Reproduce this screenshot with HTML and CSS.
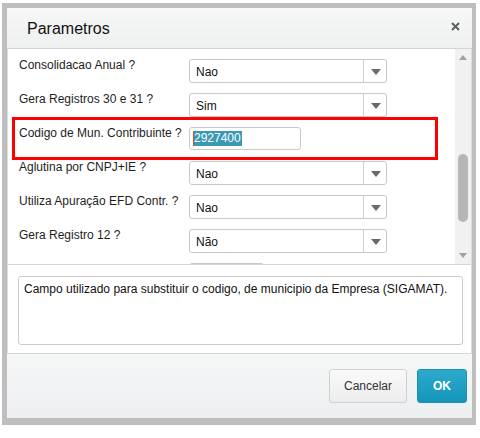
FILE: index.html
```html
<!DOCTYPE html>
<html lang="pt-BR">
<head>
    <meta charset="UTF-8">
    <meta name="viewport" content="width=device-width, initial-scale=1.0">
    <title>Parametros</title>
    <link rel="stylesheet" href="styles.css">
</head>
<body>
    <div class="frame">
        <div class="dialog">
            <div class="header">
                <span class="title">Parametros</span>
                <span class="close">
                    <svg width="9" height="9" viewBox="0 0 9 9"><path d="M1 1L8 8M8 1L1 8" stroke="#5f5f5f" stroke-width="2"/></svg>
                </span>
            </div>

            <div class="body">
                <div class="panel">
                    <div class="rows">
                        <div class="row">
                            <div class="label">Consolidacao Anual ?</div>
                            <div class="select"><span class="value">Nao</span><span class="arrow"></span></div>
                        </div>
                        <div class="row">
                            <div class="label">Gera Registros 30 e 31 ?</div>
                            <div class="select"><span class="value">Sim</span><span class="arrow"></span></div>
                        </div>
                        <div class="row focus">
                            <div class="label">Codigo de Mun. Contribuinte ?</div>
                            <div class="input"><span class="selected">2927400</span></div>
                            <div class="mark"></div>
                        </div>
                        <div class="row">
                            <div class="label">Aglutina por CNPJ+IE ?</div>
                            <div class="select"><span class="value">Nao</span><span class="arrow"></span></div>
                        </div>
                        <div class="row">
                            <div class="label">Utiliza Apuração EFD Contr. ?</div>
                            <div class="select"><span class="value">Nao</span><span class="arrow"></span></div>
                        </div>
                        <div class="row">
                            <div class="label">Gera Registro 12 ?</div>
                            <div class="select"><span class="value">Não</span><span class="arrow"></span></div>
                        </div>
                        <div class="row">
                            <div class="label"></div>
                            <div class="input short"></div>
                        </div>
                    </div>
                    <div class="scrollbar">
                        <span class="up"></span>
                        <span class="thumb"></span>
                        <span class="down"></span>
                    </div>
                </div>

                <div class="help">
                    <div class="helpbox">Campo utilizado para substituir o codigo, de municipio da Empresa (SIGAMAT).</div>
                </div>
            </div>

            <div class="footer">
                <button class="btn cancel">Cancelar</button>
                <button class="btn ok">OK</button>
            </div>
        </div>
    </div>
</body>
</html>
```

FILE: styles.css
```css
body
{
    margin: 0;
    background-color: #ffffff;
    font-family: "Liberation Sans", Arial, sans-serif;
    font-size: 12px;
    color: #1e1e1e;
}

.frame
{
    margin: 3px 0 0 2px;
    width: 474px;
    height: 422px;
    box-sizing: border-box;
    padding: 5px 4px 7px 5px;
    background-color: #bebebe;
}

.dialog
{
    height: 100%;
    display: flex;
    flex-direction: column;
    background-color: #ffffff;
}

/* title bar */
.header
{
    height: 40px;
    flex-shrink: 0;
    display: flex;
    align-items: center;
    justify-content: space-between;
    padding: 0 12px 0 20px;
    background: linear-gradient(#f6f7f7, #eef0f0);
    border-bottom: 1px solid #d2d3d3;
}

.title
{
    font-size: 16px;
    color: #111;
    padding-top: 2px;
}

.close
{
    display: flex;
    margin-top: -4px;
}

.body
{
    height: 304px;
    flex-shrink: 0;
    border-left: 1px solid #dcdcdc;
    border-right: 1px solid #dcdcdc;
    display: flex;
    flex-direction: column;
}

.panel
{
    height: 215px;
    flex-shrink: 0;
    display: flex;
    border-bottom: 1px solid #d6d6d6;
    overflow: hidden;
}

.rows
{
    flex: 1;
    padding: 9px 0 0 11px;
}

.row
{
    height: 34px;
    display: flex;
    position: relative;
}

.label
{
    width: 170px;
    line-height: 14px;
}

.select
{
    margin-top: 1px;
    width: 196px;
    height: 22px;
    border: 1px solid #c9c9c9;
    border-radius: 3px;
    display: flex;
}

.value
{
    flex: 1;
    padding-left: 6px;
    line-height: 24px;
    color: #111;
}

.arrow
{
    width: 22px;
    border-left: 1px solid #d0d0d0;
    position: relative;
}

.arrow::after
{
    content: "";
    position: absolute;
    left: 7px;
    top: 9px;
    border-left: 5px solid transparent;
    border-right: 5px solid transparent;
    border-top: 6px solid #6a6a6a;
}

.input
{
    margin-top: 1px;
    width: 107px;
    height: 21px;
    border: 1px solid #c9c9c9;
    border-radius: 3px;
    padding-left: 3px;
    display: flex;
    align-items: center;
}

.input.short
{
    width: 70px;
}

.selected
{
    background-color: #3a9ab4;
    color: #ffffff;
    line-height: 15px;
    padding-right: 1px;
    border-left: 1px solid #d94a2c;
}

/* red outline drawn over the focused field */
.mark
{
    position: absolute;
    left: -7px;
    top: -9px;
    width: 420px;
    height: 37px;
    border: 3px solid #ff0000;
}

.scrollbar
{
    width: 16px;
    background-color: #f1f1f1;
    position: relative;
}

.up, .down
{
    position: absolute;
    left: 4px;
    border-left: 4px solid transparent;
    border-right: 4px solid transparent;
}

.up
{
    top: 6px;
    border-bottom: 5px solid #a3a3a3;
}

.down
{
    top: 204px;
    border-top: 5px solid #a3a3a3;
}

.thumb
{
    position: absolute;
    left: 3px;
    top: 105px;
    width: 10px;
    height: 68px;
    border-radius: 5px;
    background-color: #b6b6b6;
}

.help
{
    flex: 1;
    padding: 11px 8px 0 10px;
}

.helpbox
{
    height: 62px;
    border: 1px solid #cccccc;
    border-radius: 3px;
    padding: 5px 5px 0;
    line-height: 15px;
    color: #111;
}

/* buttons bar */
.footer
{
    flex: 1;
    border-top: 1px solid #d6d6d6;
    background: linear-gradient(#f5f6f6, #eeeff1);
    display: flex;
    justify-content: flex-end;
    align-items: flex-start;
    gap: 10px;
    padding: 15px 5px 0 0;
}

.btn
{
    height: 34px;
    border-radius: 3px;
    font-family: "Liberation Sans", Arial, sans-serif;
    font-size: 12px;
}

.cancel
{
    width: 78px;
    border: 1px solid #cfcfcf;
    background: linear-gradient(#fafafa, #ececec);
    color: #333;
}

.ok
{
    width: 50px;
    border: 1px solid #1692b6;
    background: linear-gradient(#2eaacb, #1495ba);
    color: #ffffff;
    font-weight: bold;
}
```
